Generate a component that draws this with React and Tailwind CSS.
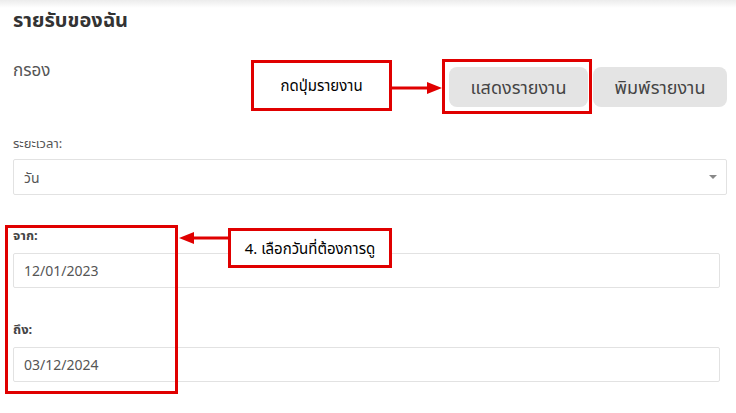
import React from "react";

const font = { fontFamily: '"Noto Sans", "Noto Sans Thai", sans-serif' };

const Arrow = ({ className, dir = "right", width }) => (
  <svg className={className} width={width} height="12" viewBox={`0 0 ${width} 12`}>
    {dir === "right" ? (
      <>
        <rect x="0" y="4.5" width={width - 14} height="3" fill="#e00000" />
        <polygon points={`${width - 15},0 ${width},6 ${width - 15},12`} fill="#e00000" />
      </>
    ) : (
      <>
        <rect x="14" y="4.5" width={width - 14} height="3" fill="#e00000" />
        <polygon points="15,0 0,6 15,12" fill="#e00000" />
      </>
    )}
  </svg>
);

const Field = ({ label, value, className }) => (
  <div className={className}>
    <div className="text-[13px] font-bold text-[#444] leading-[18px]">{label}</div>
    <div className="mt-[9px] mr-[7px] h-[35px] border border-[#e2e2e2] rounded-[2px] flex items-center px-[10px] text-[14px] text-[#555]">
      {value}
    </div>
  </div>
);

export default function App() {
  return (
    <div
      className="relative w-[736px] h-[413px] overflow-hidden bg-white"
      style={font}
    >
      <div className="h-[8px] bg-gradient-to-b from-[#ececec] to-white" />

      <div className="pl-[13px] pr-[9px]">
        <h1 className="text-[20px] font-bold text-[#333] leading-[26px] -mt-[1px]">
          รายรับของฉัน
        </h1>

        <div className="mt-[28px] flex items-start justify-between">
          <div className="text-[17px] text-[#555] leading-[24px] mt-[-3px]">กรอง</div>
          <div className="flex items-center gap-[5px] mt-[6px]">
            <button className="w-[139px] h-[40px] rounded-[8px] bg-[#e4e4e4] text-[18px] text-[#444]">
              แสดงรายงาน
            </button>
            <button className="w-[134px] h-[40px] rounded-[8px] bg-[#e4e4e4] text-[18px] text-[#444]">
              พิมพ์รายงาน
            </button>
          </div>
        </div>

        <div className="mt-[27px] text-[13px] text-[#555] leading-[18px]">ระยะเวลา:</div>
        <div className="mt-[7px] h-[36px] border border-[#e2e2e2] rounded-[2px] flex items-center justify-between px-[10px] text-[14px] text-[#555]">
          <span>วัน</span>
          <span className="w-0 h-0 border-l-[4px] border-r-[4px] border-t-[4px] border-l-transparent border-r-transparent border-t-[#888] mr-[-1px]" />
        </div>

        <Field className="mt-[31px]" label="จาก:" value="12/01/2023" />
        <Field className="mt-[32px]" label="ถึง:" value="03/12/2024" />
      </div>

      {/* annotations */}
      <div className="absolute left-[251px] top-[60px] w-[141px] h-[51px] border-[3px] border-[#e00000] flex items-center justify-center text-[15px] text-black bg-white">
        กดปุ่มรายงาน
      </div>
      <Arrow className="absolute left-[392px] top-[82px]" width={50} />
      <div className="absolute left-[442px] top-[59px] w-[150px] h-[55px] border-[3px] border-[#e00000]" />

      <div className="absolute left-[5px] top-[225px] w-[173px] h-[169px] border-[3px] border-[#e00000]" />
      <Arrow className="absolute left-[179px] top-[232px]" width={50} dir="left" />
      <div className="absolute left-[228px] top-[228px] w-[164px] h-[40px] border-[3px] border-[#e00000] flex items-center justify-center text-[15px] text-black bg-white">
        4. เลือกวันที่ต้องการดู
      </div>
    </div>
  );
}
